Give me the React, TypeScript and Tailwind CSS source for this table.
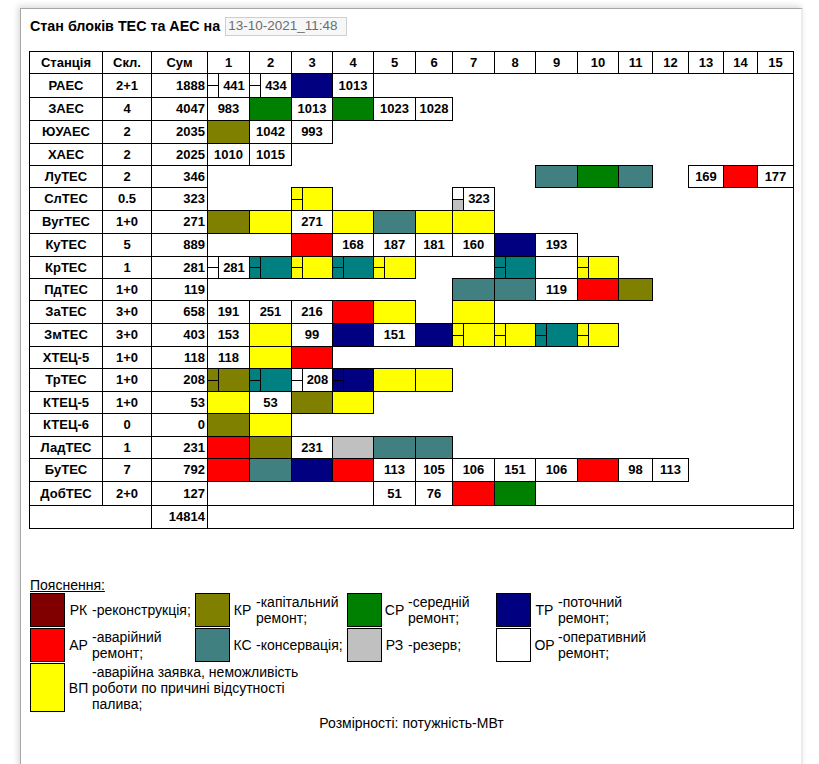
import React from 'react';

const BG: Record<string, string> = {
  W: 'bg-white',
  O: 'bg-[#808000]',
  K: 'bg-[#408080]',
  G: 'bg-[#008000]',
  N: 'bg-[#000080]',
  R: 'bg-[#ff0000]',
  Y: 'bg-[#ffff00]',
  Z: 'bg-[#c0c0c0]',
  T: 'bg-[#008080]',
  M: 'bg-[#800000]',
};

const WIDTHS = [
  'w-[73px]', 'w-[49px]', 'w-[56px]',
  'w-[42px]', 'w-[42px]', 'w-[41px]', 'w-[41px]', 'w-[42px]', 'w-[37px]', 'w-[42px]', 'w-[41px]',
  'w-[42px]', 'w-[41px]', 'w-[34px]', 'w-[36px]', 'w-[35px]', 'w-[34px]', 'w-[36px]',
];

const ROWH: Record<number, string> = { 22: 'h-[22px]', 23: 'h-[23px]', 24: 'h-[24px]' };
const INNERH: Record<number, string> = { 22: 'h-[21px]', 23: 'h-[22px]', 24: 'h-[23px]' };

type Spec = { c: string; t: string; top?: string; bot?: string } | null;

function parse(s: string): Spec {
  if (s === '.') return null;
  let top: string | undefined;
  let bot: string | undefined;
  let rest = s;
  if (s[0] === '[') {
    top = s[1];
    bot = s[2];
    rest = s.slice(4);
  }
  return { c: rest[0], t: rest.slice(1), top, bot };
}

const DATA: [string, string, string, number, string][] = [
  ['РАЕС', '2+1', '1888', 24, '[WW]W441 [WW]W434 N W1013'],
  ['ЗАЕС', '4', '4047', 23, 'W983 G W1013 G W1023 W1028'],
  ['ЮУАЕС', '2', '2035', 23, 'O W1042 W993'],
  ['ХАЕС', '2', '2025', 22, 'W1010 W1015'],
  ['ЛуТЕС', '2', '346', 22, '. . . . . . . . K G K . W169 R W177'],
  ['СлТЕС', '0.5', '323', 23, '. . [YY]Y . . . [WZ]W323'],
  ['ВугТЕС', '1+0', '271', 23, 'O Y W271 Y K Y Y'],
  ['КуТЕС', '5', '889', 23, '. . R W168 W187 W181 W160 N W193'],
  ['КрТЕС', '1', '281', 22, '[WW]W281 [TT]T [YY]Y [TT]T [YY]Y . . [TT]T . [YY]Y'],
  ['ПдТЕС', '1+0', '119', 22, '. . . . . . K K W119 R O'],
  ['ЗаТЕС', '3+0', '658', 23, 'W191 W251 W216 R Y . Y'],
  ['ЗмТЕС', '3+0', '403', 23, 'W153 Y W99 N W151 N [YY]Y [YY]Y [TT]T [YY]Y'],
  ['ХТЕЦ-5', '1+0', '118', 22, 'W118 Y R'],
  ['ТрТЕС', '1+0', '208', 23, '[OO]O [TT]T [WW]W208 [NN]N Y Y'],
  ['КТЕЦ-5', '1+0', '53', 22, 'Y W53 O Y'],
  ['КТЕЦ-6', '0', '0', 23, 'O Y'],
  ['ЛадТЕС', '1', '231', 22, 'R O W231 Z K K'],
  ['БуТЕС', '7', '792', 23, 'R K N R W113 W105 W106 W151 W106 R W98 W113'],
  ['ДобТЕС', '2+0', '127', 24, '. . . . W51 W76 R G'],
];

function cellsOf(s: string): Spec[] {
  const parts = s.split(' ').map(parse);
  while (parts.length < 15) parts.push(null);
  return parts;
}

function BlockCell({ spec, h }: { spec: Spec; h: number }) {
  if (!spec) return <td className="p-0" />;
  if (spec.top) {
    return (
      <td className="border border-black p-0">
        <div className={`flex ${INNERH[h]}`}>
          <div className="flex w-[11px] flex-col border-r border-black">
            <div className={`flex-1 border-b border-black ${BG[spec.top]}`} />
            <div className={`flex-1 ${BG[spec.bot as string]}`} />
          </div>
          <div className={`flex flex-1 items-center justify-center ${BG[spec.c]}`}>{spec.t}</div>
        </div>
      </td>
    );
  }
  return <td className={`border border-black p-0 text-center ${BG[spec.c]}`}>{spec.t}</td>;
}

function LegendBox({ c }: { c: string }) {
  return <div className={`h-full w-[35px] border border-black ${BG[c]}`} />;
}

function Code({ t }: { t: string }) {
  return <div className="flex items-center justify-center">{t}</div>;
}

function Desc({ t }: { t: string }) {
  return <div className="flex items-center pl-[1px]">{t}</div>;
}

export default function App() {
  return (
    <div className="min-h-screen bg-white pl-[20px] pt-[8px] font-['Liberation_Sans',Arial,sans-serif] text-black">
      <div className="min-h-[760px] w-[783px] border-l border-t border-r-2 border-l-[#a6a6a6] border-t-[#a6a6a6] border-r-[#ececec] pl-[8px] pt-[8px] shadow-[-2px_-2px_6px_rgba(0,0,0,0.15)]">
        <div className="flex h-[19px] items-center pl-[1px]">
          <span className="text-[14.3px] font-bold">Стан блоків ТЕС та АЕС на</span>
          <div className="ml-[5px] flex h-[19px] w-[122px] items-center border border-[#cfcfcf] bg-[#f7f7f7] px-[2px] text-[13.5px] text-[#6d6d6d]">
            13-10-2021_11:48
          </div>
        </div>

        <table className="mt-[15px] w-[765px] table-fixed border-collapse border border-black text-[13px] font-bold">
          <colgroup>
            {WIDTHS.map((w, i) => (
              <col key={i} className={w} />
            ))}
          </colgroup>
          <thead>
            <tr className="h-[22px]">
              <th className="border border-black p-0 text-center font-bold">Станція</th>
              <th className="border border-black p-0 text-center font-bold">Скл.</th>
              <th className="border border-black p-0 text-center font-bold">Сум</th>
              {Array.from({ length: 15 }, (_, i) => (
                <th key={i} className="border border-black p-0 text-center font-bold">
                  {i + 1}
                </th>
              ))}
            </tr>
          </thead>
          <tbody>
            {DATA.map(([name, skl, sum, h, blocks]) => (
              <tr key={name} className={ROWH[h]}>
                <td className="border border-black p-0 text-center">{name}</td>
                <td className="border border-black p-0 text-center">{skl}</td>
                <td className="border border-black p-0 pr-[2px] text-right">{sum}</td>
                {cellsOf(blocks).map((s, i) => (
                  <BlockCell key={i} spec={s} h={h} />
                ))}
              </tr>
            ))}
            <tr className="h-[23px]">
              <td colSpan={2} className="border border-black p-0" />
              <td className="border border-black p-0 pr-[2px] text-right">14814</td>
              <td colSpan={15} className="border border-black p-0" />
            </tr>
          </tbody>
        </table>

        <div className="mt-[48px] pl-[1px] text-[14px] leading-[16px]">
          <div className="underline">Пояснення:</div>
          <div className="grid grid-cols-[36px_25px_104px_35px_25px_92px_35px_25px_89px_36px_25px_100px] grid-rows-[34px_34px_49px] gap-y-px">
            <LegendBox c="M" />
            <Code t="РК" />
            <Desc t="-реконструкція;" />
            <LegendBox c="O" />
            <Code t="КР" />
            <Desc t="-капітальний ремонт;" />
            <LegendBox c="G" />
            <Code t="СР" />
            <Desc t="-середній ремонт;" />
            <LegendBox c="N" />
            <Code t="ТР" />
            <Desc t="-поточний ремонт;" />

            <LegendBox c="R" />
            <Code t="АР" />
            <Desc t="-аварійний ремонт;" />
            <LegendBox c="K" />
            <Code t="КС" />
            <Desc t="-консервація;" />
            <LegendBox c="Z" />
            <Code t="РЗ" />
            <Desc t="-резерв;" />
            <LegendBox c="W" />
            <Code t="ОР" />
            <Desc t="-оперативний ремонт;" />

            <LegendBox c="Y" />
            <Code t="ВП" />
            <div className="col-span-4 flex items-center pl-[1px]">
              <div className="w-[240px]">-аварійна заявка, неможливість роботи по причині відсутності палива;</div>
            </div>
          </div>
          <div className="mt-[3px] pr-[8px] text-center">Розмірності: потужність-МВт</div>
        </div>
      </div>
    </div>
  );
}
